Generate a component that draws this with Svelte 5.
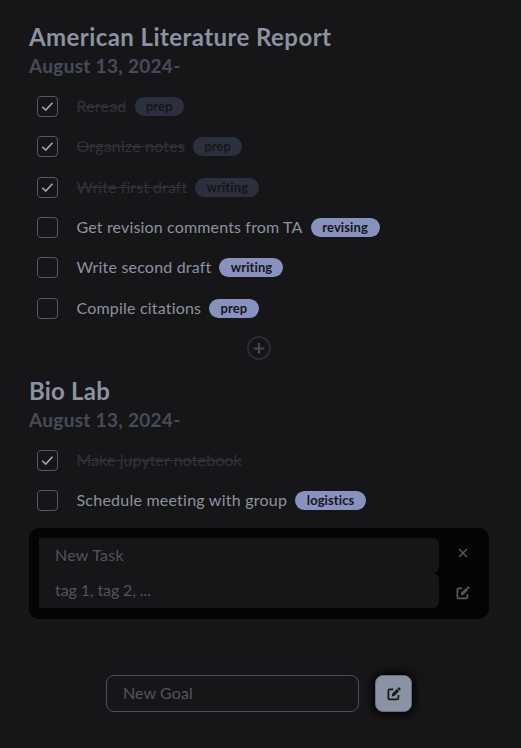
<script>
  // `track` is the letter spacing of a text, in pixels
  const goals = [
    {
      title: 'American Literature Report', track: 0.43, date: 'August 13, 2024-', adding: false,
      tasks: [
        { name: 'Reread', track: 0.2, tag: 'prep', done: true },
        { name: 'Organize notes', track: 0.18, tag: 'prep', done: true },
        { name: 'Write first draft', track: 0.07, tag: 'writing', done: true },
        { name: 'Get revision comments from TA', track: 0.155, tag: 'revising', done: false },
        { name: 'Write second draft', track: 0.19, tag: 'writing', done: false },
        { name: 'Compile citations', track: 0.19, tag: 'prep', done: false }
      ]
    },
    {
      title: 'Bio Lab', track: 0.2, date: 'August 13, 2024-', adding: true,
      tasks: [
        { name: 'Make jupyter notebook', track: 0.08, tag: '', done: true },
        { name: 'Schedule meeting with group', track: 0.23, tag: 'logistics', done: false }
      ]
    }
  ];
</script>

{#snippet edit()}
  <svg class="edit" viewBox="0 0 14 14" width="14" height="14" fill="none">
    <path d="M6.2 2.4H2.6Q1.4 2.4 1.4 3.6v7.6q0 1.2 1.2 1.2h7.6q1.2 0 1.2-1.2V8" stroke="currentColor" stroke-width="1.7" />
    <path d="M4.8 9.4l.5-2.8 4.7-4.7 2.2 2.2-4.7 4.7zM10.5 1.4l.8-.8q.6-.5 1.1 0l1.1 1.1q.4.5 0 1.1l-.8.8z" fill="currentColor" />
  </svg>
{/snippet}

<main>
  {#each goals as goal}
    <section>
      <h1 style="letter-spacing: {goal.track}px">{goal.title}</h1>
      <h2>{goal.date}</h2>
      {#each goal.tasks as task}
        <div class="task" class:done={task.done}>
          <span class="check">
            {#if task.done}
              <svg viewBox="0 0 19 19" width="19" height="19" fill="none"><path d="M4.3 9.8l3.4 3.3 6.8-7.3" stroke="currentColor" stroke-width="1.6" /></svg>
            {/if}
          </span>
          <span class="name" style="letter-spacing: {task.track}px">{task.name}</span>
          {#if task.tag}<span class="tag {task.tag}">{task.tag}</span>{/if}
        </div>
      {/each}
      {#if goal.adding}
        <div class="panel">
          <div class="fields">
            <input class="title" placeholder="New Task" />
            <input class="tags" placeholder="tag 1, tag 2, ..." />
          </div>
          <div class="actions">
            <svg viewBox="0 0 10 10" width="10" height="10"><path d="M1 1l8 8M9 1L1 9" stroke="currentColor" stroke-width="1.4" /></svg>
            {@render edit()}
          </div>
        </div>
      {:else}
        <div class="more">
          <svg viewBox="0 0 24 24" width="24" height="24" fill="none">
            <circle cx="12" cy="12" r="11.1" stroke="#2b2b40" stroke-width="1.8" />
            <path d="M12 7v10.4M6.8 12.4h10.4" stroke="#464b57" stroke-width="2" />
          </svg>
        </div>
      {/if}
    </section>
  {/each}
  <form>
    <input placeholder="New Goal" />
    <button type="button" aria-label="Add goal">{@render edit()}</button>
  </form>
</main>

<style>
  :global(body) { background: #161618; }
  main {
    box-sizing: border-box;
    height: 748px;
    padding: 23px 32px 0 29px;
    overflow: hidden;
    font-family: Lato, sans-serif;
    font-size: 16px;
    font-variant-ligatures: none;
    color: #8b92a1;
  }
  h1, h2 { margin: 0; font-weight: 700; white-space: nowrap; }
  h1 { font-size: 24px; height: 29px; line-height: 28px; }
  h2 { font-size: 19px; height: 34.5px; line-height: 28px; letter-spacing: 0.3px; color: #464b59; }
  section { height: 353.5px; }
  section:nth-of-type(2) { height: 298.5px; }
  .task { display: flex; align-items: center; height: 40.3px; padding-left: 8px; }
  .check {
    box-sizing: border-box; width: 21px; height: 21px; flex: none;
    border: 1px solid #545967; border-radius: 4px; margin-right: 18.5px;
    color: #a0a6b4;
  }
  .check svg { display: block; }
  .name { white-space: nowrap; margin-right: 8px; line-height: 20px; padding-bottom: 1px; }
  .done .name { color: #30333c; text-decoration: line-through; }
  .tag {
    box-sizing: border-box; height: 19px; width: 49.5px; border-radius: 10px;
    background: #8793be; color: #161618;
    font-size: 13px; font-weight: 700; line-height: 18px; text-align: center;
    letter-spacing: 0.1px;
  }
  .writing { width: 64px; }
  .revising { width: 69px; }
  .logistics { width: 71px; }
  .done .tag { background: #2c303e; }
  .more { display: flex; justify-content: center; align-items: center; height: 40px; }
  .panel {
    box-sizing: border-box; height: 91px; margin-top: 7.5px; padding: 10px;
    display: flex; background: #040404; border-radius: 10px;
  }
  .fields { display: flex; flex-direction: column; width: 400px; flex: none; }
  input {
    box-sizing: border-box; margin: 0; border: 0; outline: 0; padding: 0 16px 2px;
    background: #161618; color: #8b92a1; font: inherit; letter-spacing: 0.1px;
  }
  input::placeholder { color: #50545f; opacity: 1; }
  .fields input { height: 35px; border-radius: 0 6px 6px 0; }
  .fields .title { letter-spacing: 0.25px; }
  .fields .tags { letter-spacing: -0.1px; }
  .actions {
    width: 48px; flex: none; display: flex; flex-direction: column; align-items: center;
    padding-top: 10px; gap: 28px; color: #535a69;
  }
  .actions svg { flex: none; }
  form { display: flex; gap: 16px; padding-left: 77px; }
  form input { width: 253px; height: 37px; border: 1px solid #4b5060; border-radius: 8px; }
  button {
    width: 37px; height: 37px; padding: 0; border: 1px solid #656d7e; border-radius: 8px;
    background: #8b92a1; color: #161618; box-shadow: 0 0 8px 2px #000;
    display: flex; align-items: center; justify-content: center;
  }
</style>
